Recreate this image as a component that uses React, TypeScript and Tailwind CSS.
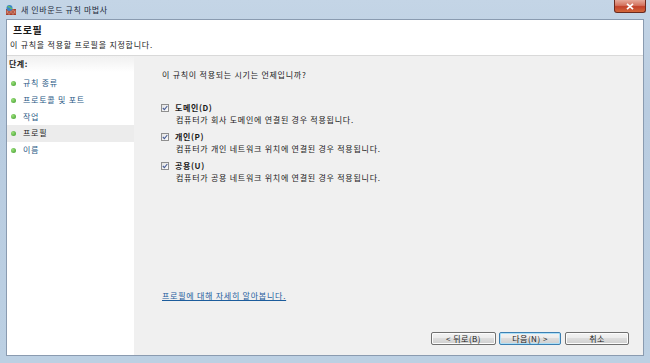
import React from "react";

const KR = { fontFamily: '"Noto Sans CJK KR", "Noto Sans", sans-serif' };

function Dot() {
  return (
    <span className="inline-block w-[5px] h-[5px] rounded-full bg-[radial-gradient(circle_at_35%_35%,#9be07a,#3c9a2a)]" />
  );
}

function Check({ label, desc }: { label: string; desc: string }) {
  return (
    <div className="flex flex-col">
      <div className="flex items-center h-[12px]">
        <span className="w-[8px] h-[8px] border border-[#8f8f8f] bg-[linear-gradient(135deg,#e4e4e4,#fbfbfb)] flex items-center justify-center mr-[6px]">
          <svg width="6" height="6" viewBox="0 0 6 6">
            <path d="M0.8 3 L2.4 4.6 L5.3 1" stroke="#4a5f97" strokeWidth="1.1" fill="none" />
          </svg>
        </span>
        <span className="font-bold text-[8px] tracking-[0.6px] text-[#1a1a1a] leading-none">{label}</span>
      </div>
      <div className="pl-[15px] text-[8px] tracking-[0.75px] leading-[12px] text-[#1a1a1a]">{desc}</div>
    </div>
  );
}

function Btn({ children, primary, w }: { children: React.ReactNode; primary?: boolean; w: string }) {
  return (
    <div
      className={
        w +
        " h-[13px] flex items-center justify-center text-[8px] tracking-[0.5px] leading-none text-[#1a1a1a] rounded-[2px] border bg-[linear-gradient(#f3f3f3,#ebebeb_45%,#dddddd_50%,#cfcfcf)] " +
        (primary ? "border-[#3c7fb1] shadow-[inset_0_0_0_1px_#aee0f8]" : "border-[#707070] shadow-[inset_0_0_0_1px_#fcfcfc]")
      }
    >
      {children}
    </div>
  );
}

export default function App() {
  return (
    <div
      className="w-[650px] h-[363px] flex flex-col overflow-hidden bg-[linear-gradient(180deg,#c4d5e6,#b9cce0_30%,#bcd0e3)]"
      style={KR}
    >
      {/* title bar */}
      <div className="h-[19px] flex items-start relative">
        <div className="flex items-center h-[19px] pl-[5px]">
          <svg width="12" height="12" viewBox="0 0 12 12">
            <rect x="1" y="5" width="10" height="6" fill="#a8402c" />
            <path d="M1 7h10M1 9h10M4 5v2M8 5v2M2.5 7v2M6 7v2M9.5 7v2M4 9v2M8 9v2" stroke="#e6b3a0" strokeWidth="0.5" />
            <circle cx="4.5" cy="4" r="3" fill="#3a86c8" />
            <path d="M2.5 3 Q4 2 5 3.5 T7 4" stroke="#6cc05a" strokeWidth="1.2" fill="none" />
          </svg>
          <span className="ml-[4px] text-[8px] tracking-[0.6px] leading-none text-[#1c2a3a]">새 인바운드 규칙 마법사</span>
        </div>
        <div className="flex-1" />
        <div className="mr-[4px] w-[32px] h-[13px] rounded-b-[3px] border border-t-0 border-[#6a2a1e] bg-[linear-gradient(#e6a99a,#d4735e_45%,#c2412a_55%,#d3683c)] flex items-center justify-center">
          <svg width="8" height="7" viewBox="0 0 8 7">
            <path d="M1 0.8 L7 6.2 M7 0.8 L1 6.2" stroke="#ffffff" strokeWidth="1.7" />
          </svg>
        </div>
      </div>

      {/* client */}
      <div className="mx-[6px] flex-1 flex flex-col border border-[#8a9bb0] bg-white">
        <div className="h-[36px] bg-white border-b border-[#d9d9d9] flex flex-col pl-[6px] pt-[3px]">
          <div className="text-[10px] font-bold tracking-[0.6px] leading-[14px] text-[#1a1a1a]">프로필</div>
          <div className="text-[8px] tracking-[0.75px] leading-[12px] text-[#1a1a1a] -ml-[3px] mt-[2px]">이 규칙을 적용할 프로필을 지정합니다.</div>
        </div>
        <div className="flex-1 flex">
          {/* left */}
          <div className="w-[127px] bg-white flex flex-col">
            <div className="h-[16px] bg-[linear-gradient(180deg,#f0f0f0,#ffffff)] pl-[2px] flex items-center text-[8px] tracking-[0.5px] font-bold text-[#1a1a1a]">
              단계:
            </div>
            <div className="flex flex-col mt-[3px]">
              {[
                ["규칙 종류", false],
                ["프로토콜 및 포트", false],
                ["작업", false],
                ["프로필", true],
                ["이름", false],
              ].map(([t, a]) => (
                <div
                  key={t as string}
                  className={"h-[16.7px] flex items-center pl-[4px] " + (a ? "bg-[#ececec]" : "")}
                >
                  <Dot />
                  <span className={"ml-[7px] text-[8px] tracking-[0.75px] leading-none " + (a ? "text-[#1a1a1a]" : "text-[#2a5a86]")}>
                    {t as string}
                  </span>
                </div>
              ))}
            </div>
          </div>
          {/* right */}
          <div className="flex-1 bg-[#f0f0f0] flex flex-col pl-[28px] pr-[14px]">
            <div className="mt-[13px] text-[8px] tracking-[0.75px] leading-[12px] text-[#1a1a1a]">이 규칙이 적용되는 시기는 언제입니까?</div>
            <div className="mt-[21px] -ml-[1px] flex flex-col gap-[5px]">
              <Check label="도메인(D)" desc="컴퓨터가 회사 도메인에 연결된 경우 적용됩니다." />
              <Check label="개인(P)" desc="컴퓨터가 개인 네트워크 위치에 연결된 경우 적용됩니다." />
              <Check label="공용(U)" desc="컴퓨터가 공용 네트워크 위치에 연결된 경우 적용됩니다." />
            </div>
            <div className="flex-1" />
            <div className="text-[8px] tracking-[0.75px] leading-[12px] text-[#1c5c9c] underline">프로필에 대해 자세히 알아봅니다.</div>
            <div className="mt-[30px] mb-[10px] flex justify-end">
              <Btn w="w-[65px]">&lt; 뒤로(B)</Btn>
              <div className="w-[3px]" />
              <Btn w="w-[62px]" primary>다음(N) &gt;</Btn>
              <div className="w-[4px]" />
              <Btn w="w-[64px]">취소</Btn>
            </div>
          </div>
        </div>
      </div>
      <div className="h-[7px]" />
    </div>
  );
}
